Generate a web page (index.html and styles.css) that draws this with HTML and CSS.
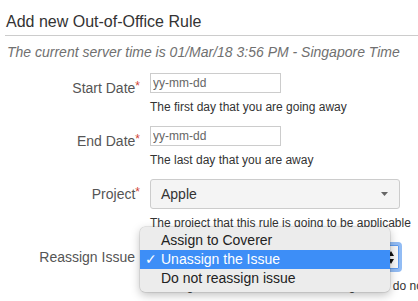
FILE: index.html
```html
<!DOCTYPE html>
<html>

<head>
    <meta charset="UTF-8">
    <meta name="viewport" content="width=device-width, initial-scale=1.0">
    <title>Add new Out-of-Office Rule</title>
    <link rel="stylesheet" href="styles.css">
</head>

<body>
    <div class="page">
        <h2 class="title">Add new Out-of-Office Rule</h2>
        <p class="server-time">The current server time is 01/Mar/18 3:56 PM - Singapore Time</p>

        <form class="rule-form">
            <div class="row">
                <label for="startDate">Start Date<span class="req">*</span></label>
                <div class="field">
                    <input type="text" id="startDate" class="date" placeholder="yy-mm-dd">
                    <div class="desc">The first day that you are going away</div>
                </div>
            </div>

            <div class="row">
                <label for="endDate">End Date<span class="req">*</span></label>
                <div class="field">
                    <input type="text" id="endDate" class="date" placeholder="yy-mm-dd">
                    <div class="desc">The last day that you are away</div>
                </div>
            </div>

            <div class="row">
                <label>Project<span class="req">*</span></label>
                <div class="field">
                    <div class="select">
                        <span>Apple</span>
                        <svg class="caret" width="7" height="4" viewBox="0 0 7 4"><path d="M0 0H7L3.5 4Z" fill="#666"/></svg>
                    </div>
                    <div class="desc">The project that this rule is going to be applicable</div>
                </div>
            </div>

            <div class="row">
                <label>Reassign Issue</label>
                <div class="field">
                    <div class="select native focused">
                        <span>Unassign the Issue</span>
                        <svg class="updown" width="6" height="13" viewBox="0 0 6 13"><path d="M3 0L6 5H0Z M3 13L6 8H0Z" fill="#111"/></svg>
                    </div>

                    <!-- open dropdown of the select above -->
                    <ul class="menu">
                        <li><span class="check"></span>Assign to Coverer</li>
                        <li class="active"><span class="check">✓</span>Unassign the Issue</li>
                        <li><span class="check"></span>Do not reassign issue</li>
                    </ul>

                    <div class="desc">Reassign the issue to coverer, unassigned or do not reassign</div>
                </div>
            </div>
        </form>
    </div>
</body>

</html>
```

FILE: styles.css
```css
body {
    margin: 0;
    background: white;
    font-family: "Liberation Sans", Arial, sans-serif;
    color: #333;
    overflow: hidden;
}
.page {
    padding: 12px 0 0 5px;
}
.title {
    margin: 0;
    padding: 0 0 3px 1px;
    font-size: 16px;
    line-height: 20px;
    font-weight: normal;
    color: #333;
    border-bottom: 1px solid #ccc;
}
.server-time {
    margin: 6px 0 0 2px;
    font-size: 14px;
    line-height: 20px;
    font-style: italic;
    color: #707070;
    white-space: nowrap;
}
.rule-form {
    margin-top: 11px;
}
.row {
    display: grid;
    grid-template-columns: 130px 1fr;
    column-gap: 15px;
    margin-bottom: 10px;
}
.row label {
    text-align: right;
    padding-top: 5px;
    font-size: 14px;
    line-height: 20px;
    color: #555;
}
.req {
    display: inline-block;
    margin-right: -5px;
    font-size: 12px;
    line-height: 1;
    vertical-align: 3px;
    color: #d04437;
}
.field {
    position: relative;
}
.date {
    display: block;
    width: 131px;
    height: 20px;
    margin: 0;
    padding: 0 2px;
    box-sizing: border-box;
    border: 1px solid #ccc;
    font-family: inherit;
    font-size: 12px;
    color: #333;
}
.date::placeholder {
    color: #666;
}
.desc {
    margin-top: 5px;
    font-size: 12px;
    line-height: 18px;
    color: #333;
    white-space: nowrap;
}
.select {
    display: flex;
    align-items: center;
    justify-content: space-between;
    width: 250px;
    height: 30px;
    padding: 0 11px 0 10px;
    box-sizing: border-box;
    background: #f4f4f4;
    border: 1px solid #ccc;
    border-radius: 3px;
    font-size: 14px;
    color: #333;
}
.select.native {
    width: 252px;
    padding: 0 5px 0 10px;
    background: #f7f7f7;
}
.select.focused {
    border: 3px solid #92bcf4;
    border-radius: 4px;
    box-shadow: inset 0 0 0 1px #5f9cef;
}
.menu {
    position: absolute;
    left: -10px;
    top: -15px;
    width: 250px;
    margin: 0;
    padding: 4px 0;
    box-sizing: border-box;
    list-style: none;
    background: #ececec;
    border-radius: 5px;
    box-shadow: 0 0 0 0.5px rgba(0,0,0,0.15), 0 3px 10px rgba(0,0,0,0.25);
    z-index: 2;
}
.menu li {
    display: flex;
    height: 19px;
    padding-left: 5px;
    font-size: 14px;
    line-height: 19px;
    color: #222;
}
.menu li.active {
    background: #3d8ef7;
    color: white;
}
.check {
    width: 16px;
    font-family: "DejaVu Sans", sans-serif;
    font-size: 14px;
}
```
